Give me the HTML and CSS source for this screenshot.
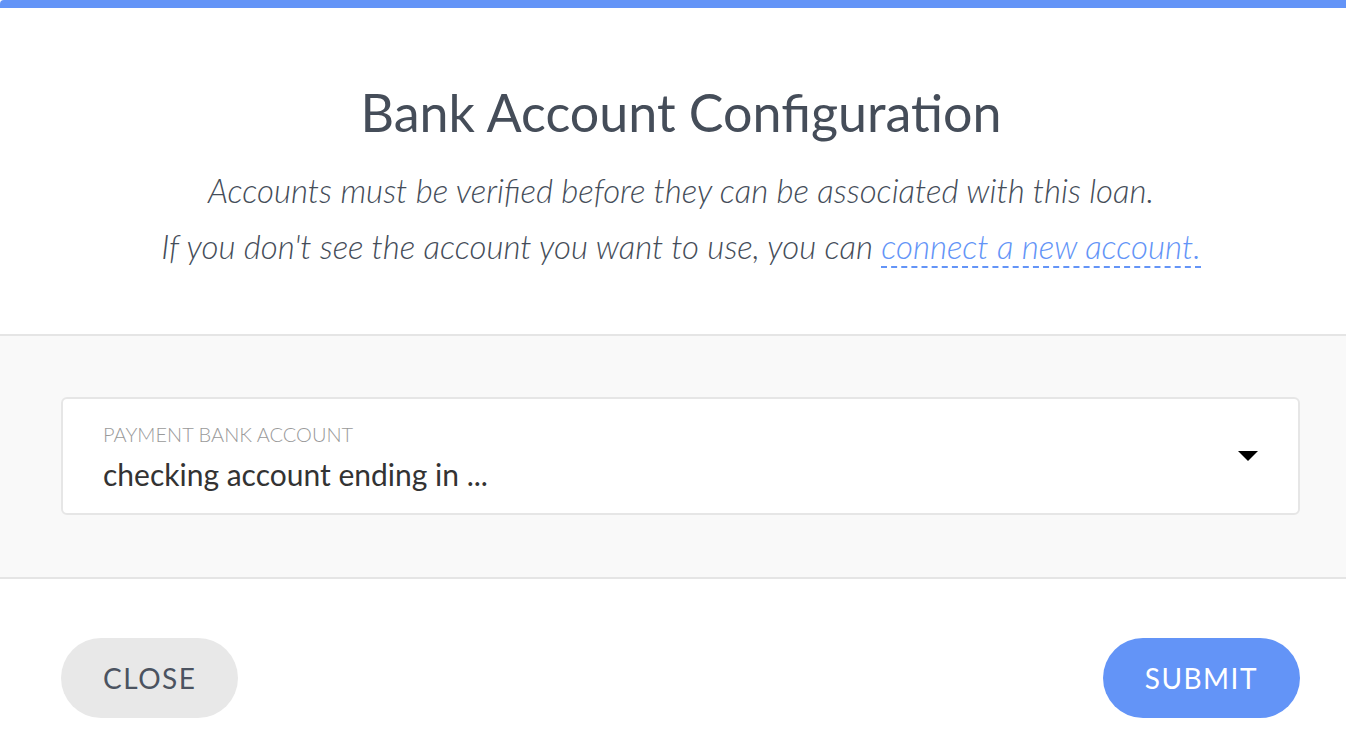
FILE: index.html
```html
<!DOCTYPE html>
<html>

<head>
  <meta charset="utf-8">
  <title>Bank Account Configuration</title>
  <link rel="stylesheet" href="styles.css">
</head>

<body>
  <div class="modal">
    <div class="modal-header">
      <h1>Bank Account Configuration</h1>
      <p>Accounts must be verified before they can be associated with this loan.</p>
      <p>If you don't see the account you want to use, you can <a href="#">connect a new account.</a></p>
    </div>

    <div class="modal-body">
      <div class="select">
        <div class="select-text">
          <span class="select-label">PAYMENT BANK ACCOUNT</span>
          <span class="select-value">checking account ending in ...</span>
        </div>
        <span class="caret"></span>
      </div>
    </div>

    <div class="modal-footer">
      <button class="btn btn-close">CLOSE</button>
      <button class="btn btn-submit">SUBMIT</button>
    </div>
  </div>
</body>

</html>
```

FILE: styles.css
```css
body {
  margin: 0;
  font-family: Lato, "Open Sans", sans-serif;
  background: #fff;
}

.modal {
  border-top: 8px solid #6394f7;
  border-top-left-radius: 4px;
}

.modal-header {
  text-align: center;
  padding: 74px 30px 60px 46px;
  color: #454d59;
}

.modal-header h1 {
  margin: 0 0 20px 0;
  font-size: 52px;
  font-weight: 400;
  line-height: 60px;
}

.modal-header p {
  margin: 0;
  font-size: 33px;
  font-weight: 300;
  font-style: italic;
  line-height: 56px;
}

.modal-header a {
  color: #6394f7;
  text-decoration: none;
  border-bottom: 2px dashed #6394f7;
}

.modal-body {
  background: #f9f9f9;
  border-top: 2px solid #e5e5e5;
  border-bottom: 2px solid #e5e5e5;
  padding: 61px 46px 62px 61px;
}

.select {
  display: flex;
  align-items: center;
  background: #fff;
  border: 2px solid #e6e6e6;
  border-radius: 6px;
  height: 118px;
  box-sizing: border-box;
  padding: 0 40px 0 40px;
}

.select-text {
  flex: 1;
  display: flex;
  flex-direction: column;
  gap: 8px;
  padding-top: 4px;
}

.select-label {
  font-size: 20px;
  font-weight: 300;
  color: #9a9a9a;
  line-height: 24px;
}

.select-value {
  font-size: 30px;
  color: #333;
  line-height: 40px;
}

.caret {
  width: 0;
  height: 0;
  border-left: 10px solid transparent;
  border-right: 10px solid transparent;
  border-top: 10px solid #000;
}

.modal-footer {
  display: flex;
  justify-content: space-between;
  padding: 59px 46px 0 61px;
}

.btn {
  height: 80px;
  border: none;
  border-radius: 40px;
  font-family: Lato, "Open Sans", sans-serif;
  font-size: 28px;
  font-weight: 400;
  letter-spacing: 1.5px;
  padding: 0 42px;
}

.btn-close {
  background: #e8e8e8;
  color: #4b5360;
}

.btn-submit {
  background: #6394f7;
  color: #fff;
}
```
